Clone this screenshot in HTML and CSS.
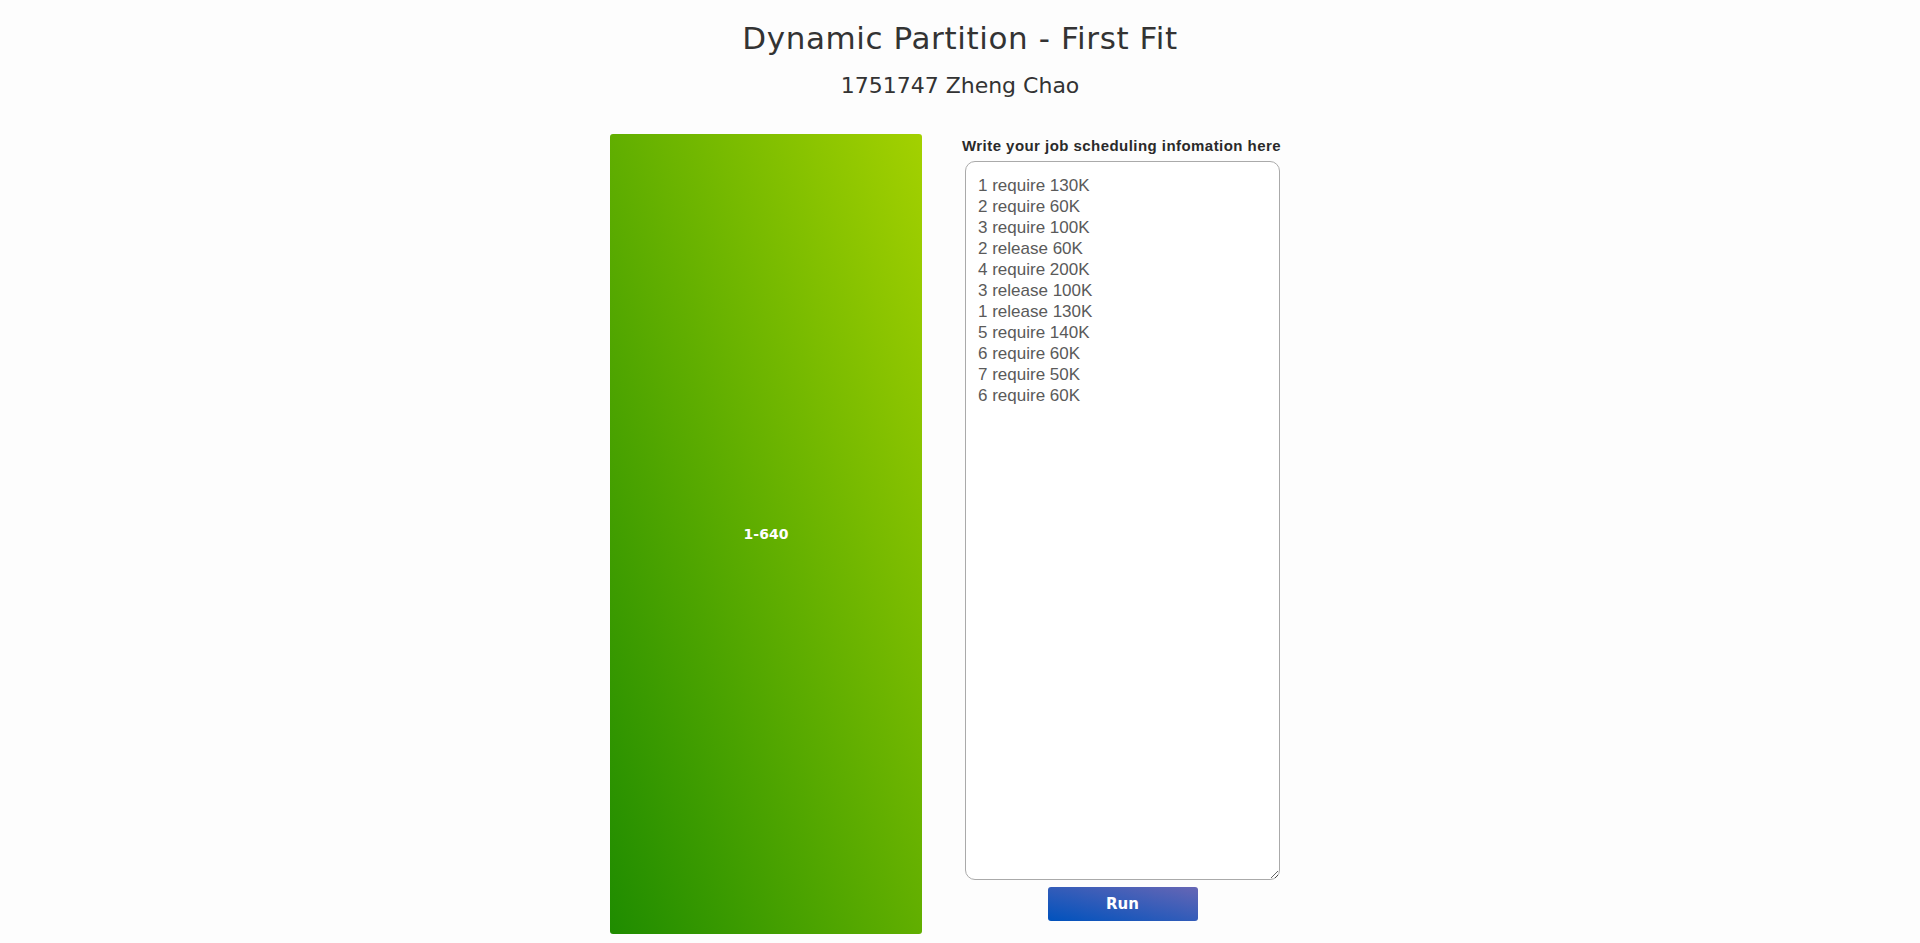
FILE: index.html
```html
<!DOCTYPE html>
<html>
<head>
<meta charset="utf-8">
<title>Dynamic Partition - First Fit</title>
<link rel="stylesheet" href="styles.css">
</head>
<body>
<header class="header">
  <h1 class="title">Dynamic Partition - First Fit</h1>
  <h2 class="subtitle">1751747 Zheng Chao</h2>
</header>
<main class="workspace">
  <div class="memory">
    <div class="block">1-640</div>
  </div>
  <div class="panel">
    <label class="label" for="jobs">Write your job scheduling infomation here</label>
    <textarea class="jobs" id="jobs">1 require 130K
2 require 60K
3 require 100K
2 release 60K
4 require 200K
3 release 100K
1 release 130K
5 require 140K
6 require 60K
7 require 50K
6 require 60K</textarea>
    <button class="run">Run</button>
  </div>
</main>
</body>
</html>
```
FILE: styles.css
```css
html, body {
  margin: 0;
  padding: 0;
  background: #fdfdfd;
  height: 943px;
  overflow: hidden;
}
body {
  font-family: "DejaVu Sans", "Liberation Sans", sans-serif;
  color: #333;
}
.header {
  text-align: center;
  padding-top: 16px;
}
.title {
  margin: 0;
  font-size: 31px;
  font-weight: normal;
  line-height: 44px;
  letter-spacing: 0.6px;
}
.subtitle {
  margin: 10px 0 0 0;
  font-size: 22px;
  font-weight: normal;
  line-height: 32px;
}
.workspace {
  display: flex;
  justify-content: center;
  padding-right: 30px;
  margin-top: 32px;
}
.memory {
  width: 312px;
  height: 800px;
  border-radius: 3px;
  overflow: hidden;
  display: flex;
  flex-direction: column;
}
.block {
  flex: 1;
  display: flex;
  align-items: center;
  justify-content: center;
  color: #fff;
  font-weight: bold;
  font-size: 14px;
  background: linear-gradient(to top right, #1f8c00, #a3d100);
}
.panel {
  width: 315px;
  margin-left: 43px;
  display: flex;
  flex-direction: column;
}
.label {
  margin-top: 2px;
  margin-left: -3px;
  white-space: nowrap;
  font-family: "Liberation Sans", sans-serif;
  font-weight: bold;
  font-size: 15px;
  letter-spacing: 0.45px;
  line-height: 20px;
  color: #2a2a2a;
}
.jobs {
  margin-top: 5px;
  box-sizing: border-box;
  width: 315px;
  height: 719px;
  border: 1px solid #aaa;
  border-radius: 10px;
  padding: 13px 12px;
  font-family: "Liberation Sans", sans-serif;
  font-size: 17px;
  line-height: 21px;
  color: #5a5a5a;
  background: #fff;
  resize: both;
  outline: none;
}
.run {
  align-self: center;
  margin-top: 7px;
  width: 150px;
  height: 34px;
  border: none;
  border-radius: 3px;
  color: #fff;
  font-family: "DejaVu Sans", sans-serif;
  font-weight: bold;
  font-size: 15px;
  background: linear-gradient(to top right, #0052bd, #6666b5);
}
```
